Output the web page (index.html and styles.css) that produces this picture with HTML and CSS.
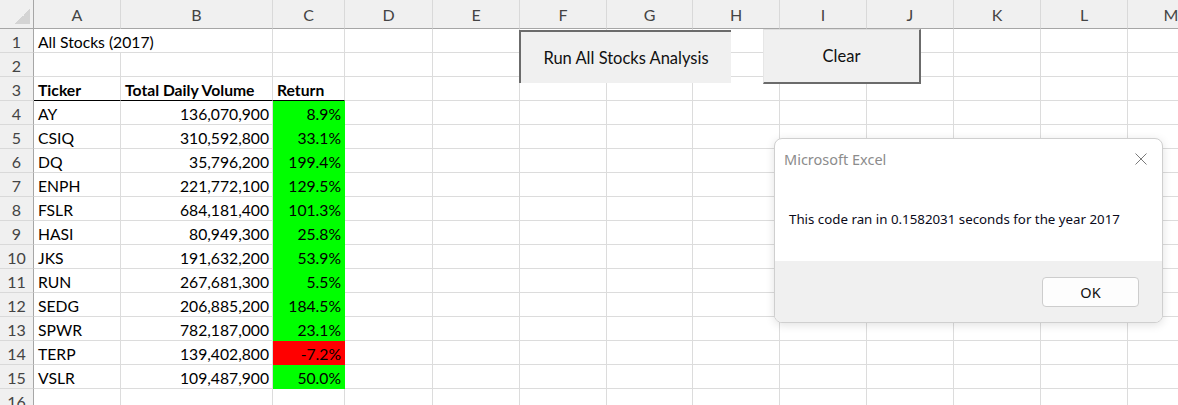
FILE: index.html
```html
<!DOCTYPE html>
<html>
<head>
<meta charset="utf-8">
<link rel="stylesheet" href="styles.css">
</head>
<body>
<div class="sheet">
  <div class="grid">
    <div class="hd corner"><span class="tri"></span></div>
    <div class="hd">A</div><div class="hd">B</div><div class="hd">C</div><div class="hd">D</div><div class="hd">E</div><div class="hd">F</div><div class="hd">G</div><div class="hd">H</div><div class="hd">I</div><div class="hd">J</div><div class="hd">K</div><div class="hd">L</div><div class="hd">M</div>

    <div class="rn">1</div><div class="c span2">All Stocks (2017)</div><div class="c"></div><div class="c"></div><div class="c"></div><div class="c"></div><div class="c"></div><div class="c"></div><div class="c"></div><div class="c"></div><div class="c"></div><div class="c"></div><div class="c"></div>

    <div class="rn">2</div><div class="c"></div><div class="c"></div><div class="c"></div><div class="c"></div><div class="c"></div><div class="c"></div><div class="c"></div><div class="c"></div><div class="c"></div><div class="c"></div><div class="c"></div><div class="c"></div><div class="c"></div>

    <div class="rn">3</div><div class="c b ul">Ticker</div><div class="c b ul">Total Daily Volume</div><div class="c b ul">Return</div><div class="c"></div><div class="c"></div><div class="c"></div><div class="c"></div><div class="c"></div><div class="c"></div><div class="c"></div><div class="c"></div><div class="c"></div><div class="c"></div>

    <div class="rn">4</div><div class="c">AY</div><div class="c r">136,070,900</div><div class="c r pos">8.9%</div><div class="c"></div><div class="c"></div><div class="c"></div><div class="c"></div><div class="c"></div><div class="c"></div><div class="c"></div><div class="c"></div><div class="c"></div><div class="c"></div>

    <div class="rn">5</div><div class="c">CSIQ</div><div class="c r">310,592,800</div><div class="c r pos">33.1%</div><div class="c"></div><div class="c"></div><div class="c"></div><div class="c"></div><div class="c"></div><div class="c"></div><div class="c"></div><div class="c"></div><div class="c"></div><div class="c"></div>

    <div class="rn">6</div><div class="c">DQ</div><div class="c r">35,796,200</div><div class="c r pos">199.4%</div><div class="c"></div><div class="c"></div><div class="c"></div><div class="c"></div><div class="c"></div><div class="c"></div><div class="c"></div><div class="c"></div><div class="c"></div><div class="c"></div>

    <div class="rn">7</div><div class="c">ENPH</div><div class="c r">221,772,100</div><div class="c r pos">129.5%</div><div class="c"></div><div class="c"></div><div class="c"></div><div class="c"></div><div class="c"></div><div class="c"></div><div class="c"></div><div class="c"></div><div class="c"></div><div class="c"></div>

    <div class="rn">8</div><div class="c">FSLR</div><div class="c r">684,181,400</div><div class="c r pos">101.3%</div><div class="c"></div><div class="c"></div><div class="c"></div><div class="c"></div><div class="c"></div><div class="c"></div><div class="c"></div><div class="c"></div><div class="c"></div><div class="c"></div>

    <div class="rn">9</div><div class="c">HASI</div><div class="c r">80,949,300</div><div class="c r pos">25.8%</div><div class="c"></div><div class="c"></div><div class="c"></div><div class="c"></div><div class="c"></div><div class="c"></div><div class="c"></div><div class="c"></div><div class="c"></div><div class="c"></div>

    <div class="rn">10</div><div class="c">JKS</div><div class="c r">191,632,200</div><div class="c r pos">53.9%</div><div class="c"></div><div class="c"></div><div class="c"></div><div class="c"></div><div class="c"></div><div class="c"></div><div class="c"></div><div class="c"></div><div class="c"></div><div class="c"></div>

    <div class="rn">11</div><div class="c">RUN</div><div class="c r">267,681,300</div><div class="c r pos">5.5%</div><div class="c"></div><div class="c"></div><div class="c"></div><div class="c"></div><div class="c"></div><div class="c"></div><div class="c"></div><div class="c"></div><div class="c"></div><div class="c"></div>

    <div class="rn">12</div><div class="c">SEDG</div><div class="c r">206,885,200</div><div class="c r pos">184.5%</div><div class="c"></div><div class="c"></div><div class="c"></div><div class="c"></div><div class="c"></div><div class="c"></div><div class="c"></div><div class="c"></div><div class="c"></div><div class="c"></div>

    <div class="rn">13</div><div class="c">SPWR</div><div class="c r">782,187,000</div><div class="c r pos">23.1%</div><div class="c"></div><div class="c"></div><div class="c"></div><div class="c"></div><div class="c"></div><div class="c"></div><div class="c"></div><div class="c"></div><div class="c"></div><div class="c"></div>

    <div class="rn">14</div><div class="c">TERP</div><div class="c r">139,402,800</div><div class="c r neg">-7.2%</div><div class="c"></div><div class="c"></div><div class="c"></div><div class="c"></div><div class="c"></div><div class="c"></div><div class="c"></div><div class="c"></div><div class="c"></div><div class="c"></div>

    <div class="rn">15</div><div class="c">VSLR</div><div class="c r">109,487,900</div><div class="c r pos">50.0%</div><div class="c"></div><div class="c"></div><div class="c"></div><div class="c"></div><div class="c"></div><div class="c"></div><div class="c"></div><div class="c"></div><div class="c"></div><div class="c"></div>

    <div class="rn">16</div><div class="c"></div><div class="c"></div><div class="c"></div><div class="c"></div><div class="c"></div><div class="c"></div><div class="c"></div><div class="c"></div><div class="c"></div><div class="c"></div><div class="c"></div><div class="c"></div><div class="c"></div>
  </div>

  <button class="btn run">Run All Stocks Analysis</button>
  <button class="btn clear">Clear</button>

  <div class="dialog">
    <div class="dlg-head">
      <span class="dlg-title">Microsoft Excel</span>
      <svg class="close" width="12" height="12" viewBox="0 0 12 12"><path d="M0.5 0.5 L11.5 11.5 M11.5 0.5 L0.5 11.5" stroke="#7a7a7a" stroke-width="1" fill="none"/></svg>
    </div>
    <div class="dlg-body">This code ran in 0.1582031 seconds for the year 2017</div>
    <div class="dlg-foot"><button class="ok">OK</button></div>
  </div>
</div>
</body>
</html>
```
FILE: styles.css
```css
html, body {
  margin: 0;
  padding: 0;
  background: #ffffff;
  overflow: hidden;
}
.sheet {
  position: relative;
  width: 1178px;
  height: 405px;
  overflow: hidden;
  font-family: Lato, "Open Sans", sans-serif;
}
.grid {
  display: grid;
  grid-template-columns: 34px 87px 152px 72px 88px 87px 87px 86px 87px 87px 87px 87px 87px 87px;
  grid-template-rows: 29px;
  grid-auto-rows: 24px;
  width: 1300px;
}
.hd {
  box-sizing: border-box;
  background: #f0f0f0;
  border-right: 1px solid #d9d9d9;
  border-bottom: 1px solid #a6a6a6;
  color: #444444;
  font-size: 16px;
  text-align: center;
  line-height: 30px;
}
.corner {
  display: flex;
  justify-content: flex-end;
  align-items: flex-end;
  padding: 0 3px 4px 0;
  border-right: 1px solid #a6a6a6;
}
.tri {
  width: 15px;
  height: 15px;
  background: linear-gradient(to bottom right, transparent 50%, #d4d4d4 50%);
}
.rn {
  box-sizing: border-box;
  background: #f0f0f0;
  border-right: 1px solid #a6a6a6;
  border-bottom: 1px solid #d9d9d9;
  color: #444444;
  font-size: 16px;
  text-align: center;
  line-height: 25px;
}
.c {
  box-sizing: border-box;
  border-right: 1px solid #dcdcdc;
  border-bottom: 1px solid #dcdcdc;
  padding: 0 3px 0 4px;
  font-size: 15.7px;
  line-height: 26px;
  color: #000;
  white-space: nowrap;
}
.span2 {
  grid-column: span 2;
}
.b {
  font-weight: bold;
}
.ul {
  border-bottom: 1px solid #000;
}
.r {
  text-align: right;
}
.pos {
  background: #00ff00;
  border-right-color: #00ff00;
  border-bottom-color: #00ff00;
}
.neg {
  background: #ff0000;
  border-right-color: #ff0000;
  border-bottom-color: #ff0000;
}
.btn {
  position: absolute;
  box-sizing: border-box;
  margin: 0;
  padding: 0;
  background: #f0f0f0;
  font-family: Lato, "Open Sans", sans-serif;
  font-size: 16.5px;
  color: #111;
  border: none;
}
.run {
  left: 519px;
  top: 30px;
  width: 212px;
  height: 53px;
  border-top: 2px solid #6b6b6b;
  border-left: 2px solid #6b6b6b;
}
.clear {
  left: 763px;
  top: 29px;
  width: 158px;
  height: 55px;
  border-top: 1px solid #dedede;
  border-left: 1px solid #e6e6e6;
  border-right: 2px solid #6b6b6b;
  border-bottom: 2px solid #6b6b6b;
}
.dialog {
  position: absolute;
  left: 774px;
  top: 138px;
  width: 389px;
  height: 185px;
  box-sizing: border-box;
  border: 1px solid #cfcfcf;
  border-radius: 8px;
  background: #ffffff;
  box-shadow: 0 2px 10px rgba(0, 0, 0, 0.12);
  overflow: hidden;
  display: flex;
  flex-direction: column;
  font-family: "Noto Sans", "Open Sans", sans-serif;
}
.dlg-head {
  height: 39px;
  display: flex;
  align-items: center;
  justify-content: space-between;
  padding: 0 15px 0 9px;
}
.dlg-title {
  font-size: 14.5px;
  color: #8c8c8c;
}
.close {
  display: block;
}
.dlg-body {
  height: 83px;
  box-sizing: border-box;
  padding: 29px 0 0 14px;
  font-size: 13.3px;
  color: #0a0a1a;
  line-height: 24px;
}
.dlg-foot {
  flex: 1;
  background: #f0f0f0;
  display: flex;
  justify-content: flex-end;
  align-items: flex-start;
  padding: 16px 23px 0 0;
}
.ok {
  width: 97px;
  height: 30px;
  box-sizing: border-box;
  margin: 0;
  border: 1px solid #cdcdcd;
  border-radius: 4px;
  background: #fdfdfd;
  font-family: "Noto Sans", "Open Sans", sans-serif;
  font-size: 14.5px;
  color: #111;
}
```
